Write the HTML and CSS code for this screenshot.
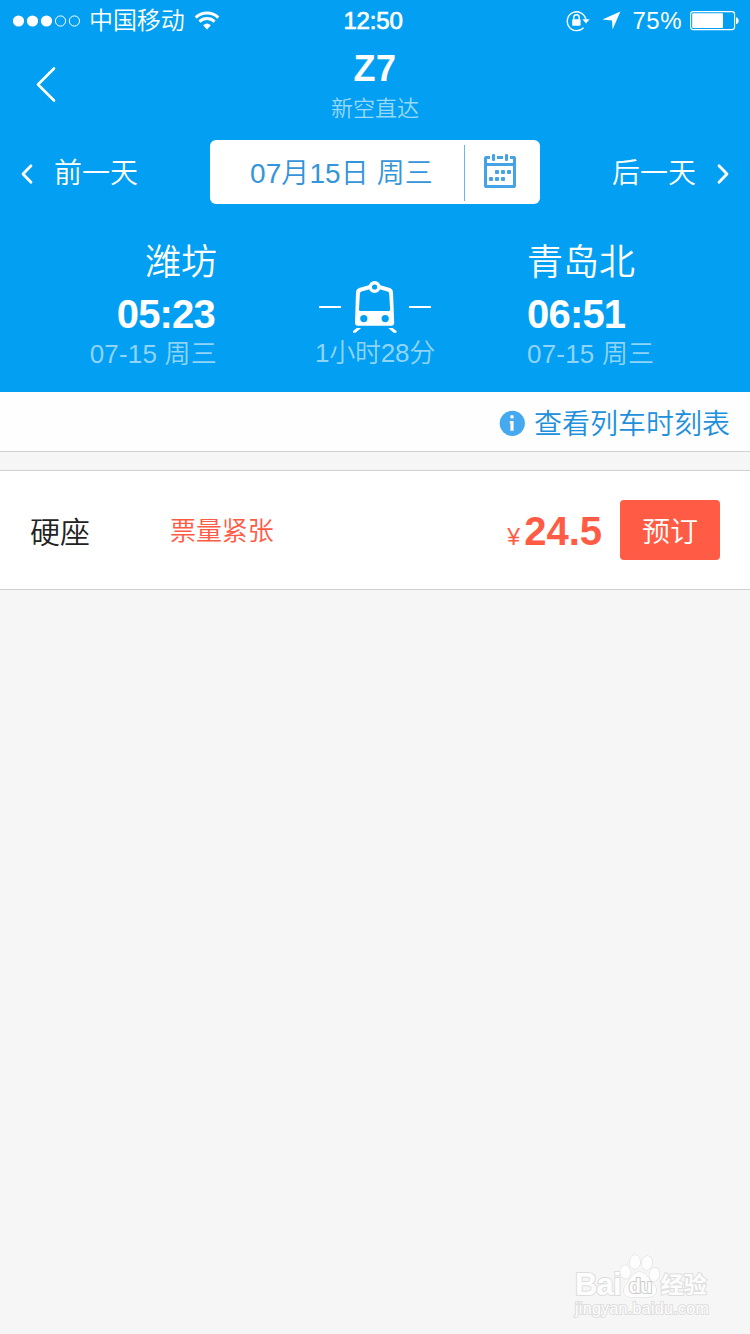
FILE: index.html
```html
<!DOCTYPE html>
<html lang="zh-CN">
<head>
    <meta charset="UTF-8">
    <meta name="viewport" content="width=device-width, initial-scale=1.0">
    <title>Z7 新空直达</title>
    <link rel="stylesheet" href="styles.css">
</head>
<body>
    <header class="header">
        <div class="status-bar">
            <div class="status-left">
                <svg class="signal" width="68" height="12" viewBox="0 0 68 12" fill="#fff">
                    <circle cx="6.5" cy="6" r="5.6"/>
                    <circle cx="20.5" cy="6" r="5.6"/>
                    <circle cx="34.5" cy="6" r="5.6"/>
                    <circle cx="48.5" cy="6" r="5.1" fill="none" stroke="#fff"/>
                    <circle cx="62.4" cy="6" r="5.1" fill="none" stroke="#fff"/>
                </svg>
                <span class="carrier">中国移动</span>
                <svg class="wifi" width="26" height="19" viewBox="0 0 26 19" fill="none" stroke="#fff" stroke-width="3">
                    <path d="M1.7 6.6a16.2 16.2 0 0 1 22.6 0"/>
                    <path d="M5.4 10.6a11 11 0 0 1 15.2 0"/>
                    <path d="M13 18.4l-3.9-4.2a6 6 0 0 1 7.8 0z" fill="#fff" stroke="none"/>
                </svg>
            </div>
            <div class="clock">12:50</div>
            <div class="status-right">
                <svg class="lock" width="24" height="22" viewBox="0 0 24 22" fill="none" stroke="#fff">
                    <path d="M17.6 17.6A9.4 9.4 0 1 1 19.8 9" stroke-width="1.4"/>
                    <path d="M16.4 9.3h7.2L20 13.4z" fill="#fff" stroke="none"/>
                    <path d="M7.8 10V7.5a2.7 2.7 0 0 1 5.4 0V10" stroke-width="1.4"/>
                    <rect x="6.2" y="9.3" width="8.4" height="6.4" rx="0.8" fill="#fff" stroke="none"/>
                </svg>
                <svg class="location" width="19" height="19" viewBox="0 0 19 19" fill="#fff">
                    <path d="M18.4 0.4L10.6 18.6L10 9.4L0.4 8.6z"/>
                </svg>
                <span class="percent">75%</span>
                <svg class="battery" width="50" height="20" viewBox="0 0 50 20">
                    <rect x="0.6" y="0.6" width="44" height="18" rx="2.6" fill="none" stroke="#fff" stroke-width="1.1"/>
                    <rect x="2.2" y="2.2" width="30.8" height="14.8" rx="1" fill="#fff"/>
                    <path d="M46 6.2c3.6.6 3.6 6.4 0 7z" fill="#fff"/>
                </svg>
            </div>
        </div>

        <div class="nav">
            <svg class="back" width="22" height="38" viewBox="0 0 22 38" fill="none" stroke="#fff" stroke-width="2.6" stroke-linecap="round" stroke-linejoin="round">
                <path d="M19 3.5L3 19.5l16 16"/>
            </svg>
            <div class="nav-title">
                <h1>Z7</h1>
                <p>新空直达</p>
            </div>
        </div>

        <div class="day-bar">
            <div class="day prev">
                <svg width="14" height="22" viewBox="0 0 14 22" fill="none" stroke="#fff" stroke-width="2.8" stroke-linecap="round" stroke-linejoin="round">
                    <path d="M11 2.7L3 11l8 8.3"/>
                </svg>
                <span>前一天</span>
            </div>
            <div class="date-box">
                <span class="date">07月15日 周三</span>
                <span class="calendar">
                    <svg width="32" height="34" viewBox="0 0 32 34" fill="#45a2e4">
                        <path d="M0 4q0-2 2-2h4v3H3v4h26V5h-3V2h4q2 0 2 2v28q0 2-2 2H2q-2 0-2-2zM3 12v19h26V12z" fill-rule="evenodd"/>
                        <rect x="13" y="2" width="6" height="3"/>
                        <rect x="8" y="0" width="3" height="7" rx="1.2"/>
                        <rect x="21" y="0" width="3" height="7" rx="1.2"/>
                        <rect x="11" y="16" width="4" height="4" rx="1"/>
                        <rect x="17" y="16" width="4" height="4" rx="1"/>
                        <rect x="23" y="16" width="4" height="4" rx="1"/>
                        <rect x="5" y="23" width="4" height="4" rx="1"/>
                        <rect x="11" y="23" width="4" height="4" rx="1"/>
                        <rect x="17" y="23" width="4" height="4" rx="1"/>
                    </svg>
                </span>
            </div>
            <div class="day next">
                <span>后一天</span>
                <svg width="14" height="22" viewBox="0 0 14 22" fill="none" stroke="#fff" stroke-width="2.8" stroke-linecap="round" stroke-linejoin="round">
                    <path d="M3 2.7L11 11l-8 8.3"/>
                </svg>
            </div>
        </div>

        <div class="trip">
            <div class="station from">
                <div class="name">潍坊</div>
                <div class="time">05:23</div>
                <div class="trip-date">07-15 周三</div>
            </div>
            <div class="duration">
                <div class="train">
                    <span class="dash"></span>
                    <svg width="44" height="53" viewBox="0 0 44 53">
                        <path d="M17.5 4.8L6 8Q3.2 9 3 12L2 42.5Q2 45.7 5 45.7H38.2Q41.2 45.7 41.2 42.5L40 12Q39.8 9 37 8L25.5 4.8zM16.5 9.2L8.5 11.4Q7 12 6.9 13.5L6 29.5Q6 31 7.5 31H35.5Q37.2 31 37.1 29.5L36.2 13.5Q36 12 34.5 11.4L26.5 9.2z" fill="#fff" fill-rule="evenodd"/>
                        <circle cx="21.6" cy="7" r="4.3" fill="#029ff3" stroke="#fff" stroke-width="3.4"/>
                        <circle cx="10.8" cy="38.6" r="3.6" fill="#029ff3"/>
                        <circle cx="32.2" cy="38.6" r="3.6" fill="#029ff3"/>
                        <path d="M3.8 48h4.2l-1 1-4.4 3.8H0V51zM35.5 48h4.2l3.8 3v1.8h-2.8l-4.400-3.800z" fill="#fff"/>
                    </svg>
                    <span class="dash"></span>
                </div>
                <div class="length">1小时28分</div>
            </div>
            <div class="station to">
                <div class="name">青岛北</div>
                <div class="time">06:51</div>
                <div class="trip-date">07-15 周三</div>
            </div>
        </div>
    </header>

    <div class="timetable">
        <svg width="26" height="26" viewBox="0 0 26 26">
            <circle cx="13.3" cy="13.3" r="12.6" fill="#45a9f0"/>
            <rect x="11.4" y="5.2" width="3.2" height="3.2" rx="0.6" fill="#fff"/>
            <path d="M10.8 11h3.8v9.8h-3.2v-7.600h-.6z" fill="#fff"/>
        </svg>
        <span>查看列车时刻表</span>
    </div>

    <main class="seat">
        <span class="seat-name">硬座</span>
        <span class="seat-left">票量紧张</span>
        <span class="price"><span class="yuan">¥</span>24.5</span>
        <button class="book">预订</button>
    </main>

    <footer class="watermark">
        <div class="brand">
            <span class="bai">Bai</span>
            <span class="paw">
                <svg width="42" height="46" viewBox="0 0 42 46" fill="#fdfdfd" stroke="#dcdcdc">
                    <ellipse cx="6.5" cy="18" rx="5.3" ry="6.8" transform="rotate(-8 6.5 18)"/>
                    <ellipse cx="16" cy="8" rx="5.2" ry="7"/>
                    <ellipse cx="28" cy="9" rx="5.2" ry="7" transform="rotate(8 28 9)"/>
                    <ellipse cx="35.5" cy="20.5" rx="5" ry="6.8" transform="rotate(12 35.5 20.5)"/>
                    <path d="M20.500 18c-7 0-8 6-12 11-6 6-5 14 4 14h17c9 0 10-9 4-14-5-5-6-11-13-11z"/>
                </svg>
                <span class="du">du</span>
            </span>
            <span class="jingyan">经验</span>
        </div>
        <div class="site">jingyan.baidu.com</div>
    </footer>
</body>
</html>
```

FILE: styles.css
```css
* {
    box-sizing: border-box;
}
body {
    display: flex;
    flex-direction: column;
    height: 1334px;
    margin: 0;
    font-family: "Liberation Sans", "Noto Sans CJK SC", sans-serif;
    font-weight: 350;
    background: #f6f6f6;
    color: #222;
}
svg {
    display: block;
    flex: none;
}
.header {
    height: 392px;
    background: #029ff3;
    color: #fff;
}

/* Status bar */
.status-bar {
    display: grid;
    grid-template-columns: 1fr 70px 1fr;
    align-items: center;
    height: 40px;
    padding: 1px 10px 0 12px;
    font-size: 24px;
    line-height: 36px;
}
.status-left, .status-right {
    display: flex;
    align-items: center;
}
.status-left span, .status-right span {
    padding-top: 1px;
}
.status-right {
    justify-content: flex-end;
}
.carrier {
    margin: 0 9px 0 9px;
    letter-spacing: -0.1px;
}
.clock {
    margin: 1px 4px 0 -2px;
    text-align: center;
    letter-spacing: -0.2px;
    -webkit-text-stroke: 0.7px #fff;
}
.lock {
    margin-right: 12px;
}
.location {
    margin-right: 11px;
}
.percent {
    margin-right: 8px;
    letter-spacing: 0.5px;
}

/* Title */
.nav {
    display: grid;
    grid-template-columns: 35px 1fr 35px;
    height: 100px;
}
.back {
    margin: 25px 0 0 35px;
}
.nav-title {
    text-align: center;
}
.nav-title h1 {
    margin: 8px 0 0;
    font-size: 36px;
    line-height: 42px;
    letter-spacing: 0.4px;
}
.nav-title p {
    margin: 4px 0 0;
    font-size: 22px;
    line-height: 30px;
    color: #9ad9fa;
}

/* Day switcher */
.day-bar {
    display: grid;
    grid-template-columns: 1fr 330px 1fr;
    height: 64px;
    padding: 0 20px 0 20px;
    font-size: 28px;
    line-height: 60px;
}
.day {
    display: flex;
    align-items: center;
    gap: 20px;
    padding-top: 3px;
}
.next {
    justify-content: flex-end;
}
.date-box {
    display: flex;
    border-radius: 6px;
    background: #fff;
    color: #3495da;
}
.date {
    width: 254px;
    padding: 4px 0 0 9px;
    text-align: center;
    letter-spacing: 0.1px;
}
.calendar {
    display: flex;
    align-items: center;
    height: 56px;
    margin-top: 5px;
    padding: 0 0 4px 19px;
    border-left: 1px solid #6bb5ea;
}

/* Stations */
.trip {
    display: grid;
    grid-template-columns: 217px 310px 1fr;
    padding-top: 36px;
}
.from {
    text-align: right;
}
.name {
    font-size: 36px;
    line-height: 46px;
}
.time {
    font-size: 40px;
    font-weight: bold;
    line-height: 56px;
    letter-spacing: -0.8px;
}
.from .time {
    padding-right: 2px;
}
.trip-date {
    padding-top: 2px;
    font-size: 26px;
    line-height: 20px;
    letter-spacing: 0.2px;
    color: #8fd4f9;
}
.duration {
    padding: 40px 0 0 6px;
}
.train {
    display: flex;
    align-items: center;
    justify-content: center;
    gap: 12px;
}
.dash {
    width: 22px;
    height: 2px;
    background: #fff;
}
.length {
    margin-top: 7px;
    text-align: center;
    font-size: 26px;
    line-height: 26px;
    letter-spacing: -0.2px;
    color: #8fd4f9;
}

.timetable {
    display: flex;
    align-items: center;
    justify-content: flex-end;
    gap: 9px;
    height: 60px;
    padding: 3px 20px 0 0;
    border-bottom: 1px solid #d0d0d0;
    background: #fefefe;
    font-size: 28px;
    color: #2190dc;
}
.timetable span {
    margin-top: -2px;
}

/* Seat row */
.seat {
    display: flex;
    align-items: center;
    height: 120px;
    margin-top: 18px;
    padding: 0 30px;
    border-top: 1px solid #d0d0d0;
    border-bottom: 1px solid #d0d0d0;
    background: #fff;
}
.seat-name {
    width: 140px;
    margin-top: -1px;
    font-size: 30px;
}
.seat-left {
    margin-top: -3px;
    font-size: 26px;
    letter-spacing: -0.1px;
    color: #ff5b45;
}
.price {
    margin: 2px 18px 0 auto;
    font-size: 40px;
    font-weight: bold;
    color: #ff5b45;
}
.yuan {
    margin-right: 4px;
    font-size: 23px;
    font-weight: normal;
}
.book {
    width: 100px;
    height: 60px;
    padding: 0;
    border: none;
    border-radius: 4px;
    background: #ff5b45;
    color: #fff;
    font-family: inherit;
    font-size: 28px;
    font-weight: 350;
}

/* Watermark */
.watermark {
    width: 134px;
    margin: auto 41px 17px auto;
    color: #fdfdfd;
    -webkit-text-stroke: 2px #dedede;
    paint-order: stroke fill;
}
.brand {
    display: flex;
    align-items: flex-end;
    height: 46px;
    font-weight: bold;
}
.bai {
    font-size: 31px;
    line-height: 30px;
    letter-spacing: -0.8px;
}
.paw {
    position: relative;
    margin-left: -2px;
}
.du {
    position: absolute;
    left: 10px;
    bottom: 4px;
    font-size: 20px;
    line-height: 20px;
    letter-spacing: -1px;
    -webkit-text-stroke: 2px #ccc;
}
.jingyan {
    font-size: 23px;
    line-height: 30px;
}
.site {
    font-size: 16px;
    line-height: 17px;
    letter-spacing: 0.3px;
}
```
